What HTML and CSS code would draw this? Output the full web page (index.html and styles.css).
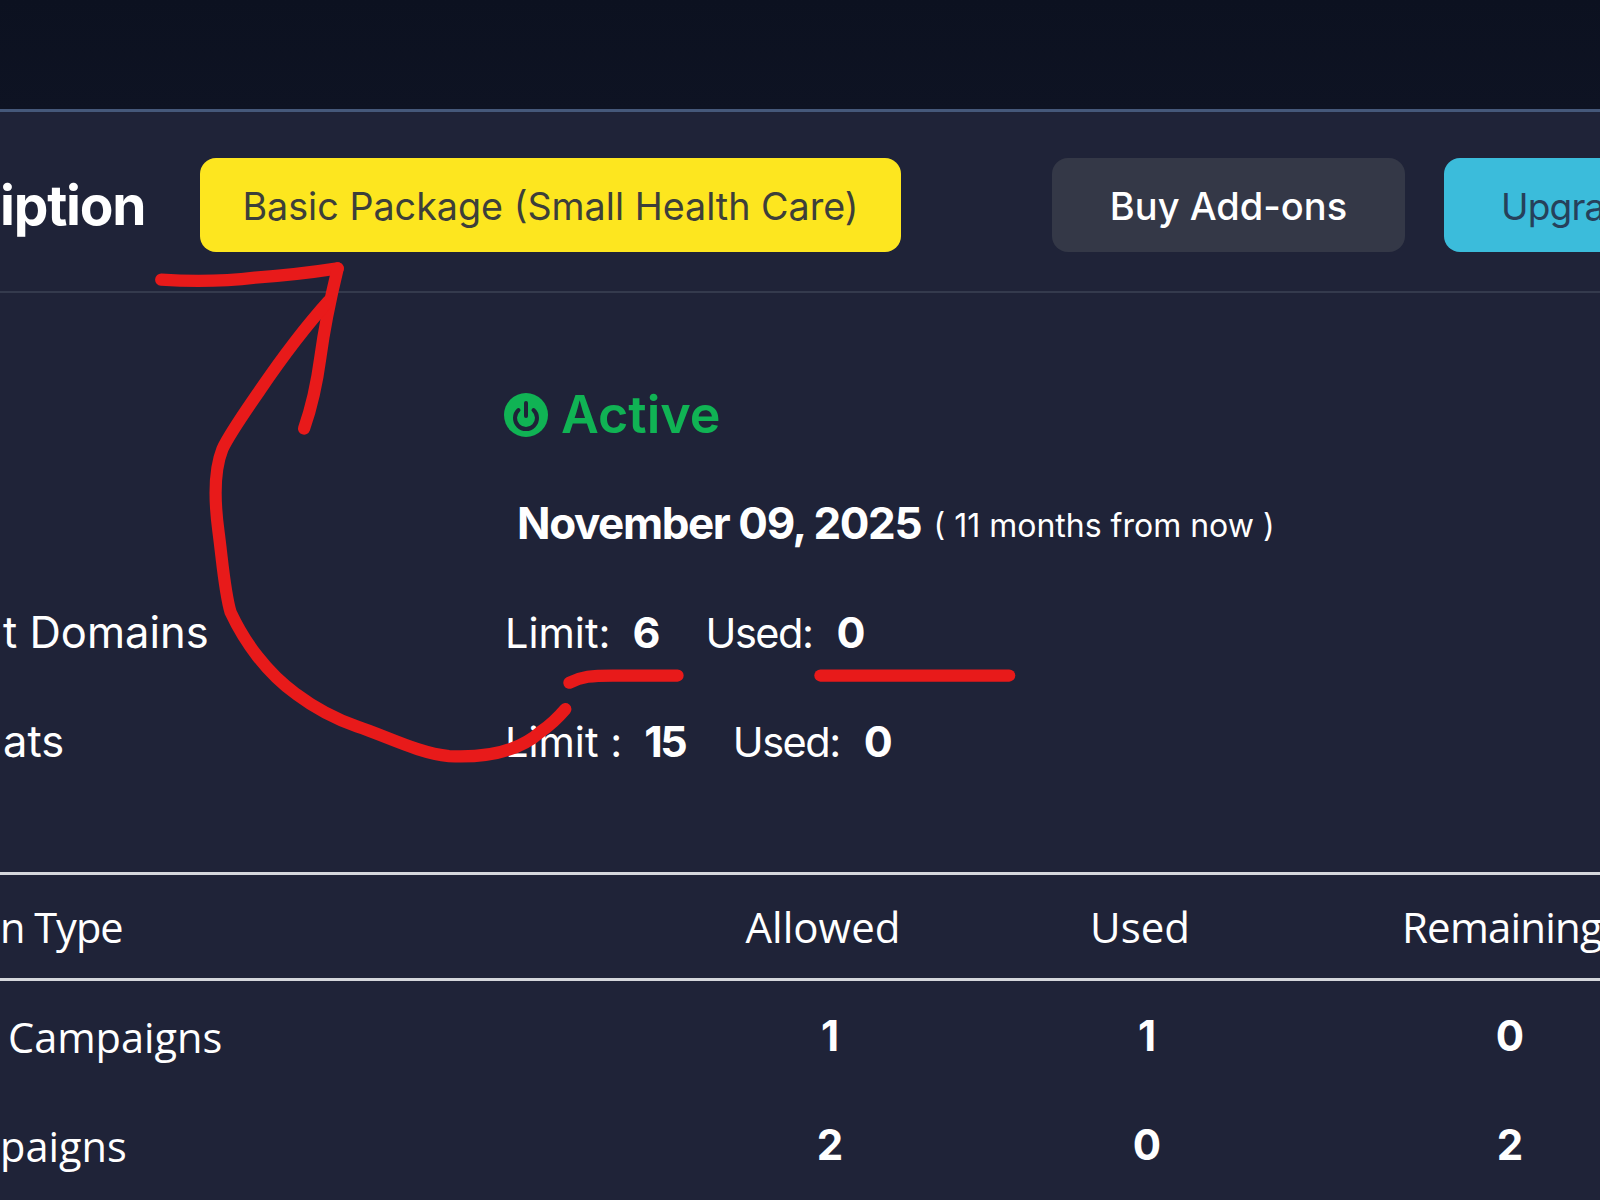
FILE: index.html
```html
<!DOCTYPE html>
<html>
<head>
    <title>Subscription</title>
    <link rel="stylesheet" href="styles.css">
</head>
<body>
    <div class="topbar"></div>

    <div class="panel">
        <div class="panel-header">
            <h2 class="panel-title">iption</h2>
            <span class="package">Basic Package (Small Health Care)</span>
            <button class="btn btn-addons">Buy Add-ons</button>
            <button class="btn btn-upgrade">Upgra</button>
        </div>

        <div class="details">
            <div class="detail-row">
                <span class="detail-label"></span>
                <span class="status">
                    <svg class="status-icon" viewBox="0 0 44 44">
                        <circle cx="22" cy="22" r="22" fill="#10b354"/>
                        <path d="M14.5 17a11 11 0 1 0 15 0" fill="none" stroke="#1f2338" stroke-width="4" stroke-linecap="round"/>
                        <path d="M22 10v13" fill="none" stroke="#1f2338" stroke-width="4" stroke-linecap="round"/>
                    </svg>
                    Active
                </span>
            </div>
            <div class="detail-row">
                <span class="detail-label"></span>
                <span class="expiry"><b>November 09, 2025</b> <small>( 11 months from now )</small></span>
            </div>
            <div class="detail-row">
                <span class="detail-label">t Domains</span>
                <span class="usage">
                    <span>Limit:</span><b class="usage-limit">6</b>
                    <span class="usage-text">Used:</span><b class="usage-used">0</b>
                </span>
            </div>
            <div class="detail-row">
                <span class="detail-label">ats</span>
                <span class="usage">
                    <span>Limit :</span><b class="usage-limit">15</b>
                    <span class="usage-text">Used:</span><b class="usage-used">0</b>
                </span>
            </div>
        </div>

        <table class="quota">
            <thead>
                <tr>
                    <th class="quota-name">n Type</th>
                    <th>Allowed</th>
                    <th>Used</th>
                    <th>Remaining</th>
                </tr>
            </thead>
            <tbody>
                <tr>
                    <td class="quota-name quota-indent">Campaigns</td>
                    <td>1</td>
                    <td>1</td>
                    <td>0</td>
                </tr>
                <tr>
                    <td class="quota-name">paigns</td>
                    <td>2</td>
                    <td>0</td>
                    <td>2</td>
                </tr>
            </tbody>
        </table>
    </div>

    <!-- red pen marks drawn over the screenshot -->
    <svg class="markup" viewBox="0 0 1568 1176">
        <path d="M158 274C190 276 225 275 250 272C280 270 305 267 331 263"/>
        <path d="M331 263C322 300 318 320 314 350C310 380 305 400 298 420"/>
        <path d="M322 295C295 325 270 360 255 382C240 404 225 425 218 440C210 460 210 490 214 520C218 550 220 580 226 600C240 630 262 660 290 680C310 695 330 705 350 712C380 722 410 738 440 741C480 743 510 735 530 717C540 710 548 702 554 695"/>
        <path d="M558 669C570 663 580 662 600 662L664 662"/>
        <path d="M804 662L989 662"/>
    </svg>
</body>
</html>
```
FILE: styles.css
```css
html, body {
  height: 100%;
}
body {
  font-family: Inter, "Open Sans", sans-serif;
  background-color: #1f2338;
  color: white;
  margin: 0;
  overflow: hidden;
  position: relative;
}
.topbar {
  height: 109px;
  background: linear-gradient(180deg, #0c1120, #0e1323);
  border-bottom: 3px solid #45587a;
}
.panel-header {
  display: flex;
  align-items: center;
  padding: 46px 0 39px;
  border-bottom: 2px solid #343a4d;
}
.panel-title {
  flex: 0 0 200px;
  margin: 0;
  font-size: 55px;
  font-weight: 700;
  letter-spacing: -1.2px;
}
.package {
  box-sizing: border-box;
  flex: 0 0 701px;
  height: 94px;
  line-height: 97px;
  text-align: center;
  background-color: #fde61f;
  color: #3d3f3a;
  border-radius: 16px;
  font-size: 37.7px;
}
.btn {
  height: 94px;
  border: none;
  font-family: inherit;
  font-size: 38px;
}
.btn-addons {
  flex: 0 0 353px;
  margin-left: 151px;
  padding: 2px 0 0;
  border-radius: 16px;
  background-color: #343847;
  color: white;
  font-weight: 500;
}
.btn-upgrade {
  flex: 1;
  min-width: 0;
  margin-left: 39px;
  padding: 2px 0 0 57px;
  border-radius: 16px 0 0 16px;
  text-align: left;
  background-color: #3bbcdb;
  color: #26405a;
  font-size: 37px;
  letter-spacing: -0.8px;
  white-space: nowrap;
}
.details {
  padding-top: 66px;
}
.detail-row {
  display: flex;
  align-items: center;
  height: 109px;
  font-size: 41.5px;
}
.detail-label {
  flex: 0 0 502px;
  padding-left: 3px;
  font-size: 43.5px;
}
.status {
  display: flex;
  align-items: center;
  gap: 13px;
  padding-top: 2px;
  color: #10b354;
  font-size: 52px;
  font-weight: 600;
}
.status-icon {
  width: 44px;
  height: 44px;
  margin-left: -1px;
}
.expiry {
  padding-left: 12px;
  font-size: 44px;
}
.expiry b {
  letter-spacing: -1.4px;
}
.expiry small {
  font-size: 32px;
  vertical-align: 2px;
}
.usage b {
  font-size: 43px;
  font-weight: 700;
  letter-spacing: -2.5px;
}
.usage-text {
  letter-spacing: -1.5px;
}
.usage-limit {
  margin: 0 36px 0 22px;
}
.usage-used {
  margin-left: 24px;
}
.quota {
  width: 100%;
  margin-top: 77px;
  border-collapse: collapse;
  table-layout: fixed;
  font-family: "Open Sans", sans-serif;
  font-size: 42px;
}
.quota th {
  height: 103px;
  padding: 0 14px 0 0;
  font-weight: 400;
  border-top: 3px solid #d5d7dc;
  border-bottom: 3px solid #d5d7dc;
}
.quota td {
  height: 106px;
  padding: 0;
  text-align: center;
  font-family: Inter, sans-serif;
  font-weight: 700;
}
.quota th:nth-child(1) {
  width: 656px;
  letter-spacing: -1px;
}
.quota th:nth-child(2) {
  width: 306px;
}
.quota th:nth-child(3) {
  width: 300px;
}
.quota th:nth-child(4) {
  padding: 0 0 0 98px;
  text-align: left;
  letter-spacing: -0.8px;
  white-space: nowrap;
}
.quota td:nth-child(4) {
  padding-left: 116px;
}
.quota .quota-name {
  text-align: left;
  font-family: "Open Sans", sans-serif;
  font-size: 41.5px;
  font-weight: 400;
}
.quota td.quota-name {
  padding-top: 3px;
}
.quota .quota-indent {
  padding-left: 8px;
}
.markup {
  position: absolute;
  left: 0;
  top: 0;
  width: 1600px;
  height: 1200px;
  fill: none;
  stroke: #e81a1a;
  stroke-width: 12;
  stroke-linecap: round;
  stroke-linejoin: round;
}
```
